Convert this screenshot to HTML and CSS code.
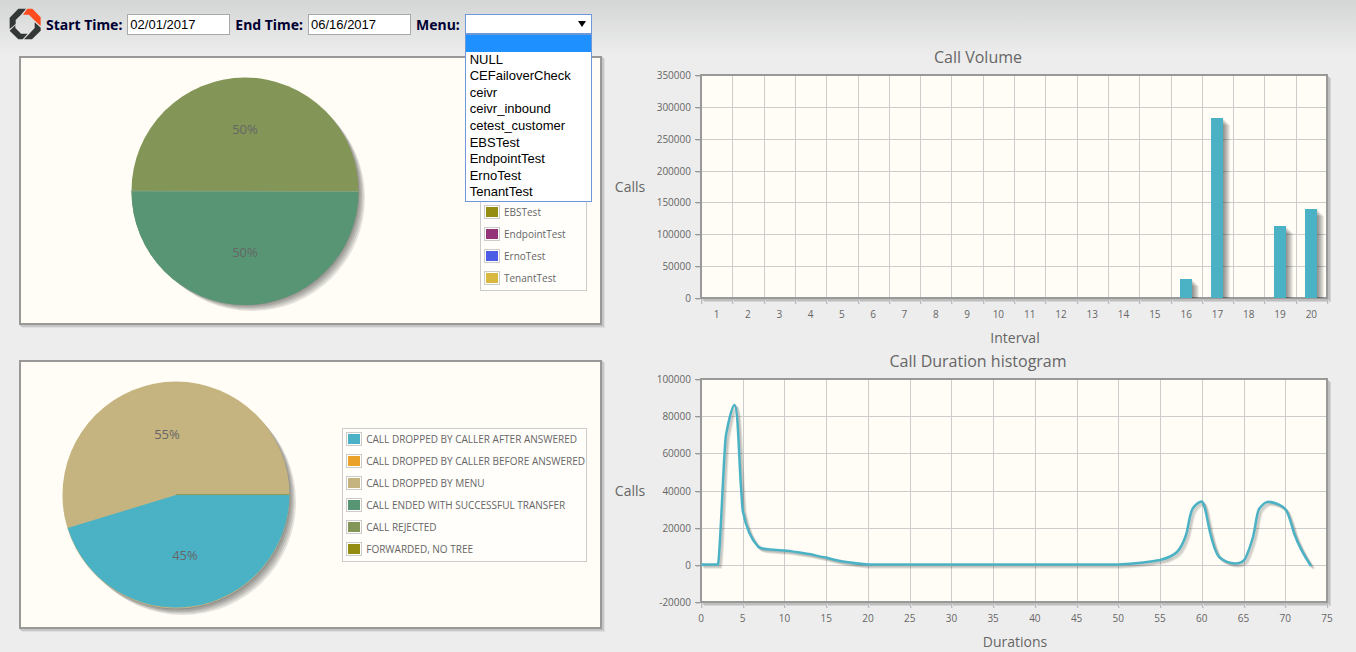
FILE: index.html
```html
<!DOCTYPE html>
<html lang="en">
<head>
<meta charset="utf-8">
<title>Call Dashboard</title>
<link rel="stylesheet" href="styles.css">
</head>
<body>
<header class="toolbar">
  <svg class="logo" viewBox="0 0 96 96" aria-hidden="true">
    <path fill="#333735" d="M28 2H51L36 20 20 36V48L2 63V29Z"/>
    <path fill="#ff4b1e" d="M55 2H70L95 28V54L76 37 60 20H42Z"/>
    <path fill="#333735" d="M2 68L19 52V60L36 77H56L41 94H28Z"/>
    <path fill="#333735" d="M77 43L95 59V68L69 94H45L61 77 77 60Z"/>
  </svg>
  <label class="name" for="start">Start Time:</label>
  <input class="date" id="start" type="text" value="02/01/2017">
  <label class="name" for="end">End Time:</label>
  <input class="date" id="end" type="text" value="06/16/2017">
  <label class="name" for="menu">Menu:</label>
  <div class="picker">
    <select class="select" id="menu">
      <option></option><option>NULL</option><option>CEFailoverCheck</option><option>ceivr</option><option>ceivr_inbound</option><option>cetest_customer</option><option>EBSTest</option><option>EndpointTest</option><option>ErnoTest</option><option>TenantTest</option>
    </select>
    <ul class="options">
      <li class="option active"></li>
      <li class="option">NULL</li>
      <li class="option">CEFailoverCheck</li>
      <li class="option">ceivr</li>
      <li class="option">ceivr_inbound</li>
      <li class="option">cetest_customer</li>
      <li class="option">EBSTest</li>
      <li class="option">EndpointTest</li>
      <li class="option">ErnoTest</li>
      <li class="option">TenantTest</li>
    </ul>
  </div>
</header>
<main class="board">
  <div class="pies">
    <section class="panel">
      <div class="pie">
        <svg class="disc" viewBox="0 0 240 240">
          <g class="shade"></g>
          <circle cx="120" cy="120" r="113.5" fill="#839557"/>
          <path d="M6.500 120A113.500 113.500 0 0 0 233.500 121L120 120Z" fill="#579575"/>
          <path d="M6.500 120L233.500 120.500" stroke="#82a380"/>
          <text class="share" x="120" y="63">50%</text>
          <text class="share" x="120" y="186">50%</text>
        </svg>
      </div>
      <ul class="legend tall">
        <li class="key"><i class="swatch olive"></i>EBSTest</li>
        <li class="key"><i class="swatch plum"></i>EndpointTest</li>
        <li class="key"><i class="swatch blue"></i>ErnoTest</li>
        <li class="key"><i class="swatch gold"></i>TenantTest</li>
      </ul>
    </section>
    <section class="panel">
      <div class="pie">
        <svg class="disc" viewBox="0 0 240 240">
          <g class="shade"></g>
          <circle cx="120" cy="120" r="113.5" fill="#c5b47f"/>
          <path d="M120 120L11.700 153A113.500 113.500 0 0 0 233.500 120Z" fill="#4bb2c5"/>
          <path d="M120 119.500H233.500" stroke="#8f9a55"/>
          <text class="share" x="111" y="64">55%</text>
          <text class="share" x="129" y="185">45%</text>
        </svg>
      </div>
      <ul class="legend">
        <li class="key"><i class="swatch aqua"></i>CALL DROPPED BY CALLER AFTER ANSWERED</li>
        <li class="key"><i class="swatch orange"></i>CALL DROPPED BY CALLER BEFORE ANSWERED</li>
        <li class="key"><i class="swatch sand"></i>CALL DROPPED BY MENU</li>
        <li class="key"><i class="swatch green"></i>CALL ENDED WITH SUCCESSFUL TRANSFER</li>
        <li class="key"><i class="swatch moss"></i>CALL REJECTED</li>
        <li class="key"><i class="swatch olive"></i>FORWARDED, NO TREE</li>
      </ul>
    </section>
  </div>
  <div class="charts">
    <figure class="chart">
      <figcaption class="title">Call Volume</figcaption>
      <svg class="plot" id="volume" viewBox="608 68 740 282"></svg>
    </figure>
    <figure class="chart">
      <figcaption class="title">Call Duration histogram</figcaption>
      <svg class="plot" id="duration" viewBox="608 68 740 280"></svg>
    </figure>
  </div>
</main>
<script src="charts.js"></script>
</body>
</html>
```
FILE: styles.css
```css
* { box-sizing: border-box; }
body {
  margin: 0;
  background: #ededed linear-gradient(#d3d6d4, #ededed) no-repeat top / 100% 56px;
  font-family: "Trebuchet MS", "Open Sans", sans-serif;
  color: #666;
}
.toolbar {
  display: flex;
  align-items: center;
  gap: 5px;
  height: 46px;
  padding: 2px 9px 0;
}
.logo { width: 32px; height: 32px; }
.name {
  font: bold 14px "Noto Sans", sans-serif;
  color: #003;
}
.date {
  width: 103px;
  height: 21px;
  padding: 0 2px;
  border: 1px solid #a9a9a9;
  background: #fff;
  font: 13px "Liberation Sans", sans-serif;
  color: #000;
}
.picker { position: relative; width: 127px; }
.picker::after {
  content: "";
  position: absolute;
  top: 7px;
  right: 6px;
  border: solid transparent;
  border-width: 6px 4px 0;
  border-top-color: #000;
}
.select {
  display: block;
  width: 100%;
  height: 20px;
  appearance: none;
  border: 1px solid #6f97dc;
  background: #fff;
}
.options {
  position: absolute;
  z-index: 2;
  top: 20px;
  left: 0;
  display: grid;
  grid-auto-rows: 1fr;
  width: 100%;
  height: 168px;
  margin: 0;
  padding: 0;
  border: 1px solid #6f97dc;
  background: #fff;
  font: 13px/16px "Liberation Sans", sans-serif;
  color: #000;
  list-style: none;
}
.option { padding-left: 4px; }
.active { background: #1e90ff; }
.board {
  display: grid;
  grid-template-columns: 583fr 740fr;
  gap: 6px;
  padding: 0 8px 0 19px;
}
.pies {
  display: flex;
  flex-direction: column;
  gap: 35px;
  padding-top: 10px;
}
.panel {
  display: flex;
  align-items: center;
  gap: 12px;
  min-height: 269px;
  padding-right: 13px;
  border: 2px solid #999;
  background: #fffdf6;
  box-shadow: 1px 1px #c4c4c4, 2px 2px #c8c8c8, 3px 3px #dedede;
}
.pie { flex: 1; text-align: center; }
.disc { display: inline-block; width: 240px; height: 240px; vertical-align: middle; }
.share { font-size: 13px; fill: #666; text-anchor: middle; }
.legend {
  margin: 0;
  padding: 0 1px 0 3px;
  border: 1px solid #ccc;
  background: #fffefb;
  font-size: 10px;
  list-style: none;
}
.tall { min-width: 107px; padding-top: 110px; }
.key { display: flex; align-items: center; gap: 4px; height: 22px; padding-bottom: 2px; white-space: nowrap; }
.swatch { width: 16px; height: 14px; border: 1px solid #ccc; padding: 1px; background-clip: content-box; }
.aqua { background-color: #4bb2c5; }
.orange { background-color: #eaa228; }
.sand { background-color: #c5b47f; }
.green { background-color: #579575; }
.moss { background-color: #839557; }
.olive { background-color: #958c12; }
.plum { background-color: #953579; }
.blue { background-color: #4b5de4; }
.gold { background-color: #d8b83f; }
.chart { margin: 0; }
.title { font-size: 16px; font-weight: 500; line-height: 22px; text-align: center; }
.plot { display: block; width: 100%; }
.tick { font-size: 10px; fill: #666; }
.mid { text-anchor: middle; }
.end { text-anchor: end; }
.axis { font-size: 14px; fill: #666; text-anchor: middle; }
```
FILE: charts.js
```js
const LEFT = 701, RIGHT = 1327, TOP = 75, BOTTOM = 298;

// Draws the frame, grid, ticks and labels shared by both charts.
function frame(yLabels, xLines, xLabels, xTitle, content) {
  const yStep = (BOTTOM - TOP) / (yLabels.length - 1);
  const xStep = (RIGHT - LEFT) / xLines;
  let s = `<rect x="${LEFT}" y="${TOP}" width="${RIGHT - LEFT}" height="${BOTTOM - TOP}" fill="#fffdf6"/>`;
  let ticks = '';
  yLabels.forEach((label, i) => {
    const y = Math.round(TOP + i * yStep) + 0.5;
    s += `<path d="M${LEFT} ${y}H${RIGHT}" stroke="#ccc"/>`;
    ticks += `<path d="M695 ${y}H700" stroke="#999"/><path d="M696 ${y + 1}H700" stroke="#ccc"/>`;
    ticks += `<text class="tick end" x="691" y="${y + 3.5}">${label}</text>`;
  });
  for (let i = 0; i <= xLines; i++) {
    const x = Math.round(LEFT + i * xStep) + 0.5;
    s += `<path d="M${x} ${TOP}V${BOTTOM}" stroke="#ccc"/>`;
    ticks += `<path d="M${x} 299V304" stroke="#bbb"/><path d="M${x + 1} 300V304" stroke="#ddd"/>`;
  }
  xLabels.forEach(([pos, label]) => {
    ticks += `<text class="tick mid" x="${LEFT + pos * xStep}" y="318">${label}</text>`;
  });
  for (let d = 3; d > 0; d--) {
    s += `<path d="M${LEFT + d} ${BOTTOM + d}H${RIGHT + d}V${TOP + d}" fill="none" stroke="#000" stroke-width="2" stroke-opacity=".1"/>`;
  }
  s += `<rect x="${LEFT}" y="${TOP}" width="${RIGHT - LEFT}" height="${BOTTOM - TOP}" fill="none" stroke="#999" stroke-width="2"/>`;
  s += content + ticks;
  s += `<text class="axis" x="630" y="192">Calls</text><text class="axis" x="1015" y="343">${xTitle}</text>`;
  return s;
}

const volumes = [[16, 279], [17, 118], [19, 226], [20, 209]];
let bars = '';
for (const [slot, top] of volumes) {
  const x = Math.round(LEFT + (slot - 0.5) * 31.3) - 6;
  for (let d = 7; d > 0; d--) {
    bars += `<path d="M${x + d} ${top + d}H${x + 12 + d}V298H${x + d}Z" fill-opacity=".07"/>`;
  }
  bars += `<rect x="${x}" y="${top}" width="12" height="${298 - top}" fill="#4bb2c5"/>`;
}
document.getElementById('volume').innerHTML = frame(
  [350000, 300000, 250000, 200000, 150000, 100000, 50000, 0], 20,
  Array.from({ length: 20 }, (_, i) => [i + 0.5, i + 1]), 'Interval', bars);

const curve = 'M701,564.5 L718,564.5 C720,560 724,445 726,435 C728,424 732,405 734.5,405 C738,405 739,460 741,487 C742,500 742,508 743,512 C746,527 751,539 758,546.5 C761,549.5 766,549 784,550.5 C792,551 800,553 809,554 C815,555 820,557 826,557.5 C833,560 845,562.5 868,564.5 L1118,564.5 C1140,563.5 1150,562 1160,560 C1168,558 1173,556 1177,552 C1181,548 1184,541 1186,535 C1189,525 1189,515 1193,508 C1196,504 1199,502 1201.5,501.5 C1205,502 1207,520 1210,532 C1213,545 1215,552 1219,557 C1224,561 1229,563.5 1235,563.5 C1240,563.5 1243,562 1245,559 C1248,553 1251,544 1253,537 C1256,525 1256,516 1259,509 C1262,505 1265,502 1268,501.7 C1275,502 1283,506 1286,510 C1290,517 1292,527 1294,533 C1299,547 1305,557 1311,566';
let line = '';
for (const d of [3, 2, 1]) {
  line += `<path d="${curve}" transform="translate(${d} ${d - 304})" fill="none" stroke="#000" stroke-opacity=".1" stroke-width="2.500"/>`;
}
line += `<path d="${curve}" transform="translate(0 -304)" fill="none" stroke="#4bb2c5" stroke-width="2.500"/>`;
document.getElementById('duration').innerHTML = frame(
  [100000, 80000, 60000, 40000, 20000, 0, -20000], 15,
  Array.from({ length: 16 }, (_, i) => [i, i * 5]), 'Durations', line);

// Stacked translucent discs give each pie its soft drop shadow.
document.querySelectorAll('.shade').forEach(g => {
  for (let d = 1; d <= 5; d++) {
    g.innerHTML += `<circle cx="${120 + d * 1.4}" cy="${120 + d * 1.4}" r="113" fill-opacity=".1"/>`;
  }
});
```
